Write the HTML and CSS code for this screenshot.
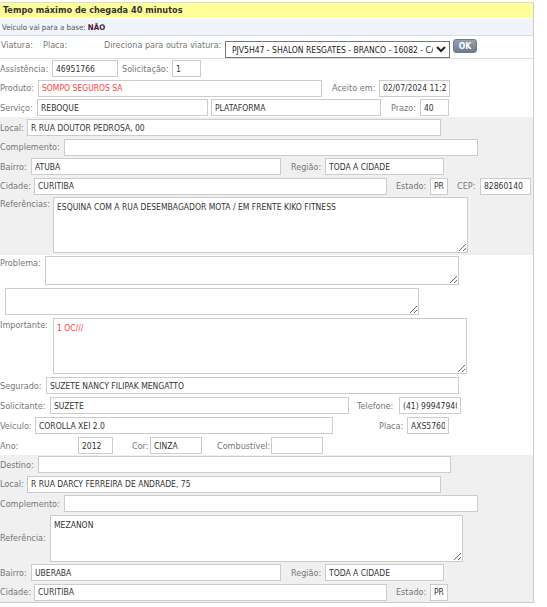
FILE: index.html
```html
<!DOCTYPE html>
<html lang="pt-BR">
<head>
<meta charset="utf-8">
<title>Ficha de atendimento</title>
<link rel="stylesheet" href="styles.css">
</head>
<body>
<div class="ficha">
  <div class="aviso">Tempo máximo de chegada 40 minutos</div>
  <div class="base">Veículo vai para a base: <b>NÃO</b></div>

  <div class="viatura">
    <span class="lbl lw-viatura">Viatura:</span>
    <span class="lbl lw-placa">Placa:</span>
    <span class="lbl lw-direciona">Direciona para outra viatura:</span>
    <select class="sel-viatura">
      <option>PJV5H47 - SHALON RESGATES - BRANCO - 16082 - CAMINHÃO PLATAFORMA</option>
    </select>
    <button class="btn-ok" type="button">OK</button>
  </div>

  <div class="secao">
    <div class="row">
      <span class="lbl lw52">Assistência:</span>
      <input class="w66" value="46951766">
      <span class="lbl ml4 lw50">Solicitação:</span>
      <input class="w29" value="1">
    </div>
    <div class="row">
      <span class="lbl lw38">Produto:</span>
      <input class="w284 red" value="SOMPO SEGUROS SA">
      <span class="lbl ml10 lw47">Aceito em:</span>
      <input class="w71" value="02/07/2024 11:23">
    </div>
    <div class="row">
      <span class="lbl lw37">Serviço:</span>
      <input class="w171" value="REBOQUE">
      <input class="w170 ml3" value="PLATAFORMA">
      <span class="lbl ml10 lw29">Prazo:</span>
      <input class="w29" value="40">
    </div>
  </div>

  <div class="secao cinza first">
    <div class="row">
      <span class="lbl lw27">Local:</span>
      <input class="w414" value="R RUA DOUTOR PEDROSA, 00">
    </div>
    <div class="row">
      <span class="lbl lw64">Complemento:</span>
      <input class="w414" value="">
    </div>
    <div class="row">
      <span class="lbl lw31">Bairro:</span>
      <input class="w250" value="ATUBA">
      <span class="lbl ml10 lw34">Região:</span>
      <input class="w119" value="TODA A CIDADE">
    </div>
    <div class="row">
      <span class="lbl lw34">Cidade:</span>
      <input class="w353" value="CURITIBA">
      <span class="lbl ml9 lw34">Estado:</span>
      <input class="w18" value="PR">
      <span class="lbl ml9 lw23">CEP:</span>
      <input class="w51" value="82860140">
    </div>
    <div class="row area">
      <span class="lbl lw53">Referências:</span>
      <textarea class="w415 h56">ESQUINA COM A RUA DESEMBAGADOR MOTA / EM FRENTE KIKO FITNESS</textarea>
    </div>
  </div>

  <div class="secao mid">
    <div class="row area">
      <span class="lbl lw45">Problema:</span>
      <textarea class="w414 h29"></textarea>
    </div>
    <div class="row area">
      <textarea class="w414 h27 ml5"></textarea>
    </div>
    <div class="row area">
      <span class="lbl lw53">Importante:</span>
      <textarea class="w414 h56 red">1 OC///</textarea>
    </div>
    <div class="row">
      <span class="lbl lw46">Segurado:</span>
      <input class="w413" value="SUZETE NANCY FILIPAK MENGATTO">
    </div>
    <div class="row">
      <span class="lbl lw50">Solicitante:</span>
      <input class="w299" value="SUZETE">
      <span class="lbl ml8 lw42">Telefone:</span>
      <input class="w62" value="(41) 999479409">
    </div>
    <div class="row">
      <span class="lbl lw35">Veículo:</span>
      <input class="w298" value="COROLLA XEI 2.0">
      <span class="lbl ml46 lw28">Placa:</span>
      <input class="w42" value="AXS5760">
    </div>
    <div class="row">
      <span class="lbl lw78">Ano:</span>
      <input class="w35" value="2012">
      <span class="lbl ml19 lw18">Cor:</span>
      <input class="w52" value="CINZA">
      <span class="lbl ml15 lw54">Combustível:</span>
      <input class="w52" value="">
    </div>
  </div>

  <div class="secao cinza last">
    <div class="row">
      <span class="lbl lw38">Destino:</span>
      <input class="w413" value="">
    </div>
    <div class="row">
      <span class="lbl lw27">Local:</span>
      <input class="w414" value="R RUA DARCY FERREIRA DE ANDRADE, 75">
    </div>
    <div class="row">
      <span class="lbl lw64">Complemento:</span>
      <input class="w414" value="">
    </div>
    <div class="row area-mid">
      <span class="lbl lw50">Referência:</span>
      <textarea class="w413 h47">MEZANON</textarea>
    </div>
    <div class="row">
      <span class="lbl lw31">Bairro:</span>
      <input class="w250" value="UBERABA">
      <span class="lbl ml10 lw34">Região:</span>
      <input class="w119" value="TODA A CIDADE">
    </div>
    <div class="row">
      <span class="lbl lw34">Cidade:</span>
      <input class="w353" value="CURITIBA">
      <span class="lbl ml9 lw34">Estado:</span>
      <input class="w18" value="PR">
    </div>
  </div>
</div>
</body>
</html>
```
FILE: styles.css
```css
html, body {
  margin: 0;
  padding: 0;
  background: #ffffff;
}

body {
  font-family: "DejaVu Sans Condensed", "DejaVu Sans", Verdana, sans-serif;
  font-stretch: condensed;
  font-size: 9px;
  color: #333333;
}

.ficha {
  width: 533px;
  margin-top: 2px;
  border-top: 1px solid #dddddd;
  border-right: 1px solid #cccccc;
  border-bottom: 1px solid #cccccc;
}

.aviso {
  height: 15px;
  line-height: 15px;
  padding-left: 3px;
  background: #ffff99;
  font-weight: bold;
  font-size: 9.1px;
  color: #333333;
  border-bottom: 1px solid #ffffff;
}

.base {
  height: 16px;
  line-height: 17px;
  padding-left: 2px;
  background: #eef5fd;
  font-size: 7.8px;
  color: #555555;
  border-bottom: 1px solid #dddddd;
}

.base b {
  color: #4a1030;
}

.viatura {
  display: flex;
  align-items: flex-start;
  height: 23px;
  padding-top: 3px;
  box-sizing: border-box;
  border-bottom: 1px solid #dddddd;
}

.viatura .lbl {
  line-height: 13px;
  box-sizing: border-box;
  padding-left: 1px;
}

.lw-viatura { width: 42px; }
.lw-placa { width: 61px; }
.lw-direciona { width: 122px; }

.sel-viatura {
  margin: 2px 0 0 0;
  width: 225px;
  height: 17px;
  padding: 0 0 0 2px;
  font: inherit;
  font-size: 8.5px;
  color: #222222;
  background: #ffffff;
  border: 1px solid #767676;
  border-radius: 0;
}

.btn-ok {
  margin: 0 0 0 3px;
  width: 24px;
  height: 14px;
  padding: 0;
  border: 1px solid #6f7c8c;
  border-radius: 3px;
  background: linear-gradient(#93a0b0, #6f7c8d);
  color: #ffffff;
  font: inherit;
  font-size: 8.5px;
  font-weight: bold;
  line-height: 12px;
}

.secao {
  display: flex;
  flex-direction: column;
  gap: 2.5px;
  padding: 1px 0;
}

.secao.cinza {
  background: #f0f0f0;
}

.secao.first {
  padding: 2px 0 2px 0;
}

.secao.mid {
  gap: 3px;
}

.secao.last {
  padding: 1px 0 1px 0;
}

.row {
  display: flex;
  align-items: center;
  min-height: 17px;
}

.row.area {
  align-items: flex-start;
}

.row.area .lbl {
  line-height: 13px;
  padding-top: 1px;
}

.row.area-mid {
  align-items: center;
}

.lbl {
  flex: none;
  color: #777777;
  white-space: nowrap;
}

input, textarea {
  flex: none;
  box-sizing: border-box;
  margin: 0;
  font: inherit;
  font-size: 8.5px;
  color: #333333;
  background: #ffffff;
  border: 1px solid #cccccc;
  border-radius: 0;
  outline: none;
}

input {
  height: 17px;
  padding: 0 3px;
}

textarea {
  padding: 4px 3px 3px 3px;
  line-height: 11px;
  overflow: hidden;
}

.red {
  color: #ff4040;
}

/* label widths */
.lw18 { width: 18px; }
.lw23 { width: 23px; }
.lw27 { width: 27px; }
.lw28 { width: 28px; }
.lw29 { width: 29px; }
.lw31 { width: 31px; }
.lw34 { width: 34px; }
.lw35 { width: 35px; }
.lw37 { width: 37px; }
.lw38 { width: 38px; }
.lw42 { width: 42px; }
.lw45 { width: 45px; }
.lw46 { width: 46px; }
.lw47 { width: 47px; }
.lw50 { width: 50px; }
.lw52 { width: 52px; }
.lw53 { width: 53px; }
.lw54 { width: 54px; }
.lw64 { width: 64px; }
.lw78 { width: 78px; }

/* field widths */
.w18 { width: 18px; }
.w29 { width: 29px; }
.w35 { width: 35px; }
.w42 { width: 42px; }
.w51 { width: 51px; }
.w52 { width: 52px; }
.w62 { width: 62px; }
.w66 { width: 66px; }
.w71 { width: 71px; }
.w119 { width: 119px; }
.w170 { width: 170px; }
.w171 { width: 171px; }
.w250 { width: 250px; }
.w284 { width: 284px; }
.w298 { width: 298px; }
.w299 { width: 299px; }
.w353 { width: 353px; }
.w413 { width: 413px; }
.w414 { width: 414px; }
.w415 { width: 415px; }

.h27 { height: 27px; }
.h29 { height: 29px; }
.h47 { height: 47px; }
.h56 { height: 56px; }

/* spacing */
.ml3 { margin-left: 3px; }
.ml4 { margin-left: 4px; }
.ml5 { margin-left: 5px; }
.ml8 { margin-left: 8px; }
.ml9 { margin-left: 9px; }
.ml10 { margin-left: 10px; }
.ml15 { margin-left: 15px; }
.ml19 { margin-left: 19px; }
.ml46 { margin-left: 46px; }
```
